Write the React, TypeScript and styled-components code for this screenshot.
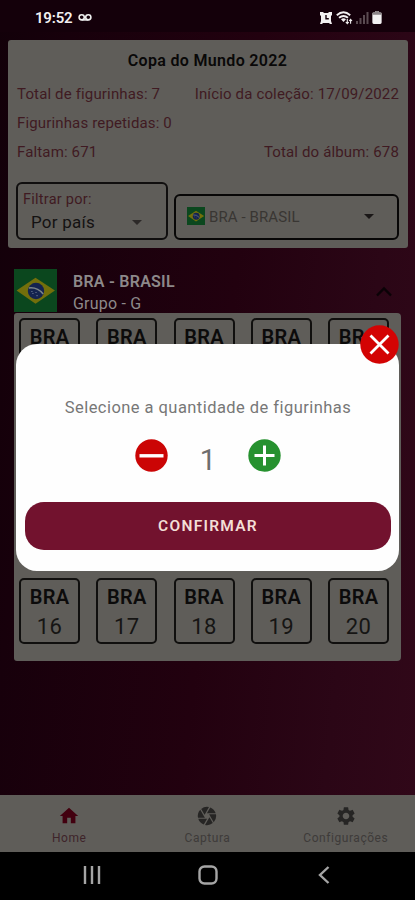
import React from 'react';
import styled, { createGlobalStyle } from 'styled-components';
import { MdHome, MdCamera, MdSettings } from 'react-icons/md';

const Global = createGlobalStyle`
  * { box-sizing: border-box; }
  body { margin: 0; background: #000; font-family: Roboto, "Liberation Sans", sans-serif; }
  button { font: inherit; border: 0; padding: 0; margin: 0; background: none; cursor: pointer; }
  svg { display: block; flex: none; }
`;

const Phone = styled.div`
  position: relative;
  width: 415px;
  height: 900px;
  overflow: hidden;
  display: flex;
  flex-direction: column;
  background: linear-gradient(96deg, #120009 0%, #17000b 14%, #22010f 52%, #2b0616 80%, #310819 100%);
`;

const StatusBar = styled.header`
  height: 32px;
  flex: none;
  display: flex;
  align-items: center;
  padding: 3px 33px 0 35px;
  background: #14000a;
  color: #f2f0f1;
`;

const Clock = styled.span`
  font-size: 15px;
  font-weight: 600;
  letter-spacing: -0.2px;
  width: 43px;
`;

const StatusIcons = styled.div`
  margin-left: auto;
  display: flex;
  align-items: center;
  gap: 3px;
`;

const Content = styled.main`
  flex: 1;
  padding: 8px 7px 0 8px;
`;

const Summary = styled.section`
  height: 208px;
  border-radius: 3px;
  background: #5f5d59;
  padding: 10px 9px 0 8px;
  color: #3f1a22;
`;

const Title = styled.h1`
  margin: 0 0 12px;
  font-size: 16px;
  line-height: 22px;
  font-weight: 600;
  letter-spacing: 0.33px;
  text-align: center;
  color: #090808;
`;

const StatRow = styled.div`
  display: flex;
  justify-content: space-between;
  font-size: 15px;
  line-height: 20px;
  margin-bottom: 9px;
  padding-left: 1px;
  white-space: nowrap;
  letter-spacing: 0.15px;
`;

const Filters = styled.div`
  display: flex;
  align-items: flex-end;
  gap: 6px;
  margin-top: 20px;
`;

const FilterBox = styled.div`
  width: 152px;
  height: 58px;
  border: 2px solid #100e0e;
  border-radius: 6px;
  padding: 6px 24px 0 5px;
`;

const FilterLabel = styled.div`
  font-size: 14.5px;
  line-height: 20px;
  letter-spacing: 0.25px;
`;

const FilterValue = styled.div`
  display: flex;
  align-items: center;
  justify-content: space-between;
  padding-left: 8px;
  font-size: 17px;
  line-height: 24px;
  letter-spacing: 0.25px;
  color: #141212;
`;

const CountryBox = styled.div`
  flex: 1;
  height: 46px;
  border: 2px solid #080707;
  border-radius: 6px;
  padding: 0 23px 2px 11px;
  display: flex;
  align-items: center;
  font-size: 15px;
  letter-spacing: 0.1px;
  color: #393633;
  gap: 4px;
`;

const CountryName = styled.span`
  flex: 1;
  padding-top: 2px;
`;

const Caret = styled.span<{ $color: string }>`
  border: 5px solid transparent;
  border-top-color: ${p => p.$color};
  border-bottom: 0;
`;

const Group = styled.section`
  padding: 21px 7px 0 6px;
`;

const GroupHead = styled.div`
  display: flex;
  height: 43px;
  color: #8d898a;
  align-items: flex-start;
  margin-bottom: 1px;
`;

const GroupText = styled.div`
  flex: 1;
  padding: 2px 0 0 16px;
  font-size: 16px;
  line-height: 22px;
  letter-spacing: 0.2px;
`;

const GroupName = styled.div`
  font-weight: 600;
  letter-spacing: 0.25px;
`;

const Chevron = styled.svg`
  margin: 17px 9px 0 0;
`;

const Album = styled.div`
  height: 348px;
  background: #5f5d59;
  border-radius: 3px 4px 4px 3px;
  padding: 5px 12px 0 5px;
  display: grid;
  grid-template-columns: repeat(5, 61px);
  grid-auto-rows: 66px;
  align-content: start;
  justify-content: space-between;
  row-gap: 20.7px;
`;

const Sticker = styled.div`
  border: 2px solid #100f0e;
  border-radius: 5px;
  display: flex;
  flex-direction: column;
  align-items: center;
  padding-top: 2px;
  font-size: 22px;
  line-height: 27px;
  letter-spacing: 0.3px;
  color: #161514;
`;

const StickerCode = styled.b`
  font-size: 20px;
  line-height: 31px;
  font-weight: 600;
  color: #0c0b0b;
`;

const TabBar = styled.nav`
  height: 57px;
  flex: none;
  background: #5f5d59;
  display: grid;
  grid-template-columns: repeat(3, 1fr);
`;

const Tab = styled.div<{ $active?: boolean }>`
  display: flex;
  flex-direction: column;
  align-items: center;
  padding-top: 10px;
  font-size: 12px;
  line-height: 14px;
  letter-spacing: 0.55px;
  color: ${p => (p.$active ? '#3e242a' : '#3e3b39')};
  gap: 4px;
  svg { color: ${p => (p.$active ? '#42000f' : '#262524')}; }
`;

const SystemNav = styled.footer`
  height: 48px;
  flex: none;
  background: #000;
  display: flex;
  align-items: center;
  justify-content: space-between;
  padding: 0 85px 2px 83px;
`;

const HomeKey = styled.svg`
  margin-right: 4px;
`;

const Dialog = styled.div`
  position: absolute;
  left: 16px;
  top: 344px;
  width: 383px;
  height: 227px;
  border-radius: 21px;
  background: #fefefe;
  padding: 52px 8px 0 9px;
  display: flex;
  flex-direction: column;
`;

const Prompt = styled.p`
  margin: 0;
  text-align: center;
  font-size: 16.5px;
  line-height: 24px;
  letter-spacing: 0.45px;
  color: #777;
  white-space: nowrap;
`;

const Stepper = styled.div`
  display: flex;
  justify-content: center;
  align-items: center;
  margin: 19px 0 30px;
  height: 33px;
`;

const Quantity = styled.span`
  width: 80px;
  text-align: center;
  font-size: 29px;
  line-height: 33px;
  padding-top: 9px;
  color: #6d6d6d;
`;

const Confirm = styled.button`
  height: 48px;
  border-radius: 19px;
  background: #72122e;
  color: #f3dfd6;
  font-size: 15.5px;
  font-weight: 600;
  letter-spacing: 1.25px;
`;

const CloseButton = styled.button`
  position: absolute;
  right: 0;
  top: -19px;
  width: 39px;
  height: 39px;
`;

function BrazilFlag({ size }: { size: number }) {
  return (
    <svg width={size} height={size} viewBox="0 0 42 42">
      <rect width="42" height="42" fill="#0b471e" />
      <path d="M2.5 21 21 8.500 40 21 21 34Z" fill="#736f0b" />
      <circle cx="21.5" cy="21.5" r="8" fill="#14234f" />
      <path d="M14.5 18.5Q23 17.5 28.5 24.5" stroke="#7c8588" strokeWidth="1.5" fill="none" />
      <path d="M18 24h1M22 26h1M17 22h1M21 23h1" stroke="#73809a" strokeWidth="1" />
    </svg>
  );
}

const tabs = [
  { label: 'Home', icon: <MdHome size={22} />, active: true },
  { label: 'Captura', icon: <MdCamera size={22} /> },
  { label: 'Configurações', icon: <MdSettings size={22} /> },
];

export default function App() {
  return (
    <>
      <Global />
      <Phone>
        <StatusBar>
          <Clock>19:52</Clock>
          <svg width="14" height="10" viewBox="0 0 14 10" fill="none" stroke="#eee" strokeWidth="1.6">
            <circle cx="3.7" cy="4.3" r="2.6" />
            <circle cx="10.3" cy="4.3" r="2.6" />
            <path d="M3.7 6.9h6.6" />
          </svg>
          <StatusIcons>
            <svg width="14" height="14" viewBox="0 0 14 14">
              <path d="M1 1h3l1 1h4l1-1h3v3l-1 1v5l1 3h-2l-1-1H4l-1 1H1l1-3V5L1 4Z" fill="#f2f0f1" />
              <path d="M7 4V7.700H9.800" stroke="#14000a" fill="none" strokeWidth="1.4" />
            </svg>
            <svg width="17" height="14" viewBox="0 0 17 14" fill="none" stroke="#f2f0f1">
              <path d="M.8 4.2Q7.5-1.5 14.2 4.2M3 6.8Q7.5 3.2 12 6.8" strokeWidth="1.9" />
              <path d="M5 8.2Q7.5 6.5 10 8.2L7.5 11Z" fill="#f2f0f1" stroke="none" />
              <path d="M11.3 8v4.5M9.8 11l1.5 1.7L12.8 11M14.6 12.8V8.4M13.2 10l1.4-1.7L16 10" strokeWidth="1.1" />
            </svg>
            <svg width="13" height="13" viewBox="0 0 13 13" fill="#5a4b51">
              <path d="M0 10h2v3H0zM3.5 7h2v6h-2zM7 4h2v9H7zM10.5 1h2v12h-2z" />
            </svg>
            <svg width="10" height="13" viewBox="0 0 10 14">
              <path d="M3 0h4v1.5h1.5Q10 1.5 10 3v9.5Q10 14 8.5 14h-7Q0 14 0 12.5V3Q0 1.5 1.5 1.5H3Z" fill="#f2f0f1" />
              <path d="M3 0h4v1.5h1.5Q10 1.5 10 3v1H0V3Q0 1.5 1.5 1.5H3Z" fill="#8b8387" />
            </svg>
          </StatusIcons>
        </StatusBar>

        <Content>
          <Summary>
            <Title>Copa do Mundo 2022</Title>
            <StatRow>
              <span>Total de figurinhas: 7</span>
              <span>Início da coleção: 17/09/2022</span>
            </StatRow>
            <StatRow>
              <span>Figurinhas repetidas: 0</span>
            </StatRow>
            <StatRow>
              <span>Faltam: 671</span>
              <span>Total do álbum: 678</span>
            </StatRow>
            <Filters>
              <FilterBox>
                <FilterLabel>Filtrar por:</FilterLabel>
                <FilterValue>
                  Por país
                  <Caret $color="#2c2928" />
                </FilterValue>
              </FilterBox>
              <CountryBox>
                <BrazilFlag size={18} />
                <CountryName>BRA - BRASIL</CountryName>
                <Caret $color="#1a1717" />
              </CountryBox>
            </Filters>
          </Summary>

          <Group>
            <GroupHead>
              <BrazilFlag size={43} />
              <GroupText>
                <GroupName>BRA - BRASIL</GroupName>
                Grupo - G
              </GroupText>
              <Chevron width="16" height="11" viewBox="0 0 16 11" fill="none" stroke="#0a0206" strokeWidth="2.4">
                <path d="M1 9.5 8 2.5 15 9.5" />
              </Chevron>
            </GroupHead>
            <Album>
              {Array.from({ length: 20 }, (_, i) => (
                <Sticker key={i}>
                  <StickerCode>BRA</StickerCode>
                  {i + 1}
                </Sticker>
              ))}
            </Album>
          </Group>
        </Content>

        <TabBar>
          {tabs.map(t => (
            <Tab key={t.label} $active={t.active}>
              {t.icon}
              {t.label}
            </Tab>
          ))}
        </TabBar>

        <SystemNav>
          <svg width="18" height="18" viewBox="0 0 18 18" stroke="#a5a5a5" strokeWidth="2.4">
            <path d="M2 0v18M9 0v18M16 0v18" />
          </svg>
          <HomeKey width="20" height="20" viewBox="0 0 20 20" fill="none" stroke="#a5a5a5" strokeWidth="2.4">
            <rect x="1.5" y="1.5" width="17" height="17" rx="5" />
          </HomeKey>
          <svg width="12" height="18" viewBox="0 0 12 18" fill="none" stroke="#a5a5a5" strokeWidth="2.4">
            <path d="M10.5 1 2 9l8.5 8" />
          </svg>
        </SystemNav>

        <Dialog role="dialog">
          <Prompt>Selecione a quantidade de figurinhas</Prompt>
          <Stepper>
            <button aria-label="Diminuir">
              <svg width="33" height="33" viewBox="0 0 33 33">
                <circle cx="16.5" cy="16.5" r="16.2" fill="#cb0505" />
                <path d="M4.5 16.8h24" stroke="#fff" strokeWidth="3.4" />
              </svg>
            </button>
            <Quantity>1</Quantity>
            <button aria-label="Aumentar">
              <svg width="33" height="33" viewBox="0 0 33 33">
                <circle cx="16.5" cy="16.5" r="16.2" fill="#26912f" />
                <path d="M6.5 16.5h20M16.5 6.5v20" stroke="#fff" strokeWidth="3" />
              </svg>
            </button>
          </Stepper>
          <Confirm>CONFIRMAR</Confirm>
          <CloseButton aria-label="Fechar">
            <svg width="39" height="39" viewBox="0 0 39 39">
              <circle cx="19.5" cy="19.5" r="19.2" fill="#d30303" />
              <path d="M10.5 10.5l18 18M28.5 10.5l-18 18" stroke="#fff" strokeWidth="2.8" />
            </svg>
          </CloseButton>
        </Dialog>
      </Phone>
    </>
  );
}
